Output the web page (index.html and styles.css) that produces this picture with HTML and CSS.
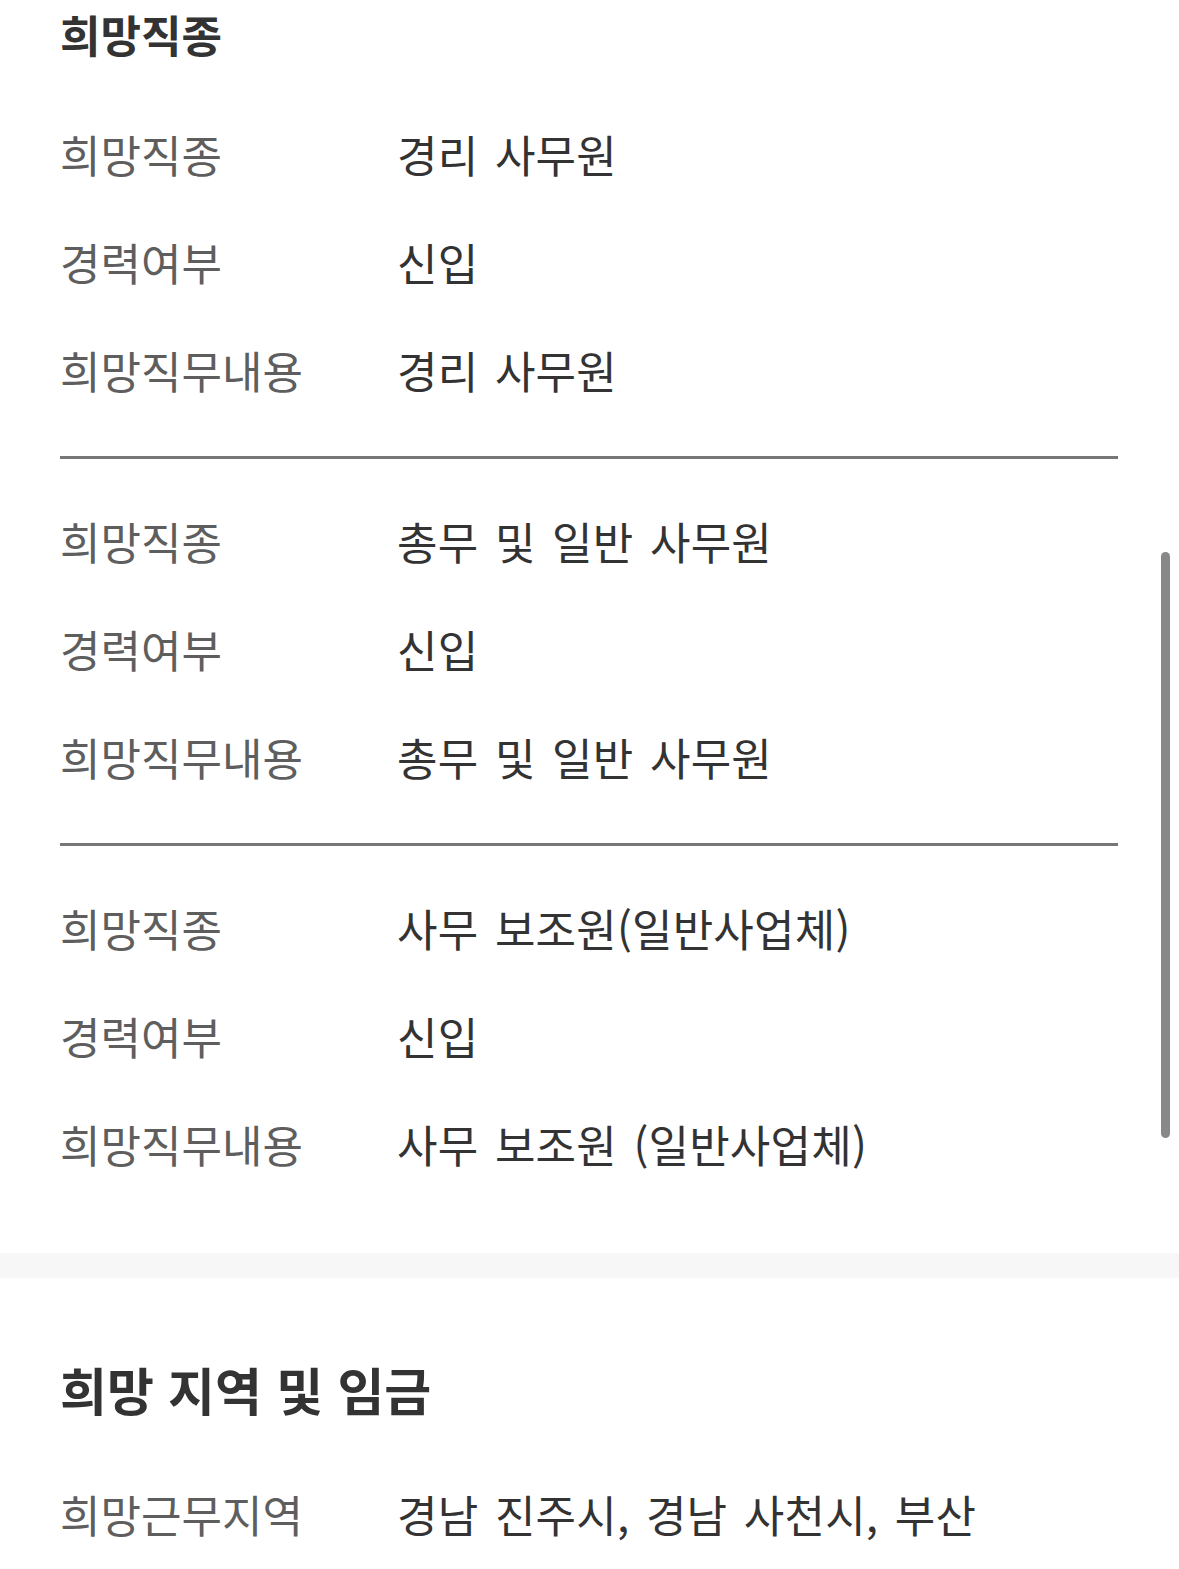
FILE: index.html
```html
<!DOCTYPE html>
<html lang="ko">
<head>
<meta charset="utf-8">
<title>희망직종</title>
<link rel="stylesheet" href="styles.css">
</head>
<body>
<main class="page">
  <section class="section">
    <h2 class="section-title small">희망직종</h2>
    <div class="group">
      <div class="row"><span class="label">희망직종</span><span class="value">경리 사무원</span></div>
      <div class="row"><span class="label">경력여부</span><span class="value">신입</span></div>
      <div class="row"><span class="label">희망직무내용</span><span class="value">경리 사무원</span></div>
    </div>
    <div class="group">
      <div class="row"><span class="label">희망직종</span><span class="value">총무 및 일반 사무원</span></div>
      <div class="row"><span class="label">경력여부</span><span class="value">신입</span></div>
      <div class="row"><span class="label">희망직무내용</span><span class="value">총무 및 일반 사무원</span></div>
    </div>
    <div class="group last">
      <div class="row"><span class="label">희망직종</span><span class="value">사무 보조원(일반사업체)</span></div>
      <div class="row"><span class="label">경력여부</span><span class="value">신입</span></div>
      <div class="row"><span class="label">희망직무내용</span><span class="value">사무 보조원 (일반사업체)</span></div>
    </div>
  </section>
  <div class="band"></div>
  <section class="section second">
    <h2 class="section-title">희망 지역 및 임금</h2>
    <div class="group plain">
      <div class="row"><span class="label">희망근무지역</span><span class="value">경남 진주시, 경남 사천시, 부산</span></div>
    </div>
  </section>
</main>
<div class="scrollbar"></div>
</body>
</html>
```

FILE: styles.css
```css
html, body {
  margin: 0;
  padding: 0;
  background: #ffffff;
}
body {
  font-family: "Noto Sans CJK KR", "Noto Sans", sans-serif;
  color: #333333;
  height: 1569px;
  overflow: hidden;
  position: relative;
}
.page {
  display: flex;
  flex-direction: column;
}
.section {
  padding: 0 61px 0 60px;
  display: flex;
  flex-direction: column;
}
.section-title {
  margin: 0;
  font-size: 51px;
  font-weight: 700;
  line-height: 72px;
  color: #333333;
}
.section-title.small {
  font-size: 44px;
  line-height: 68px;
}
.second {
  padding-top: 75px;
}
.group {
  padding: 30px 0;
  display: flex;
  flex-direction: column;
}
.group:first-of-type {
  padding-top: 34px;
}
.group + .group {
  border-top: 3px solid #777777;
}
.group.last {
  padding-bottom: 53px;
}
.group.plain {
  padding-top: 37px;
}
.row {
  display: grid;
  grid-template-columns: 337px 1fr;
  height: 108px;
  box-sizing: border-box;
  padding-bottom: 4px;
  align-items: center;
  font-size: 44px;
  line-height: 60px;
}
.label {
  color: #5e5e5e;
}
.value {
  color: #333333;
  word-spacing: 4px;
  letter-spacing: 0.2px;
}
.band {
  height: 25px;
  background: #f7f7f7;
}
.scrollbar {
  position: absolute;
  left: 1161px;
  top: 552px;
  width: 9px;
  height: 586px;
  border-radius: 5px;
  background: #888888;
}
```
